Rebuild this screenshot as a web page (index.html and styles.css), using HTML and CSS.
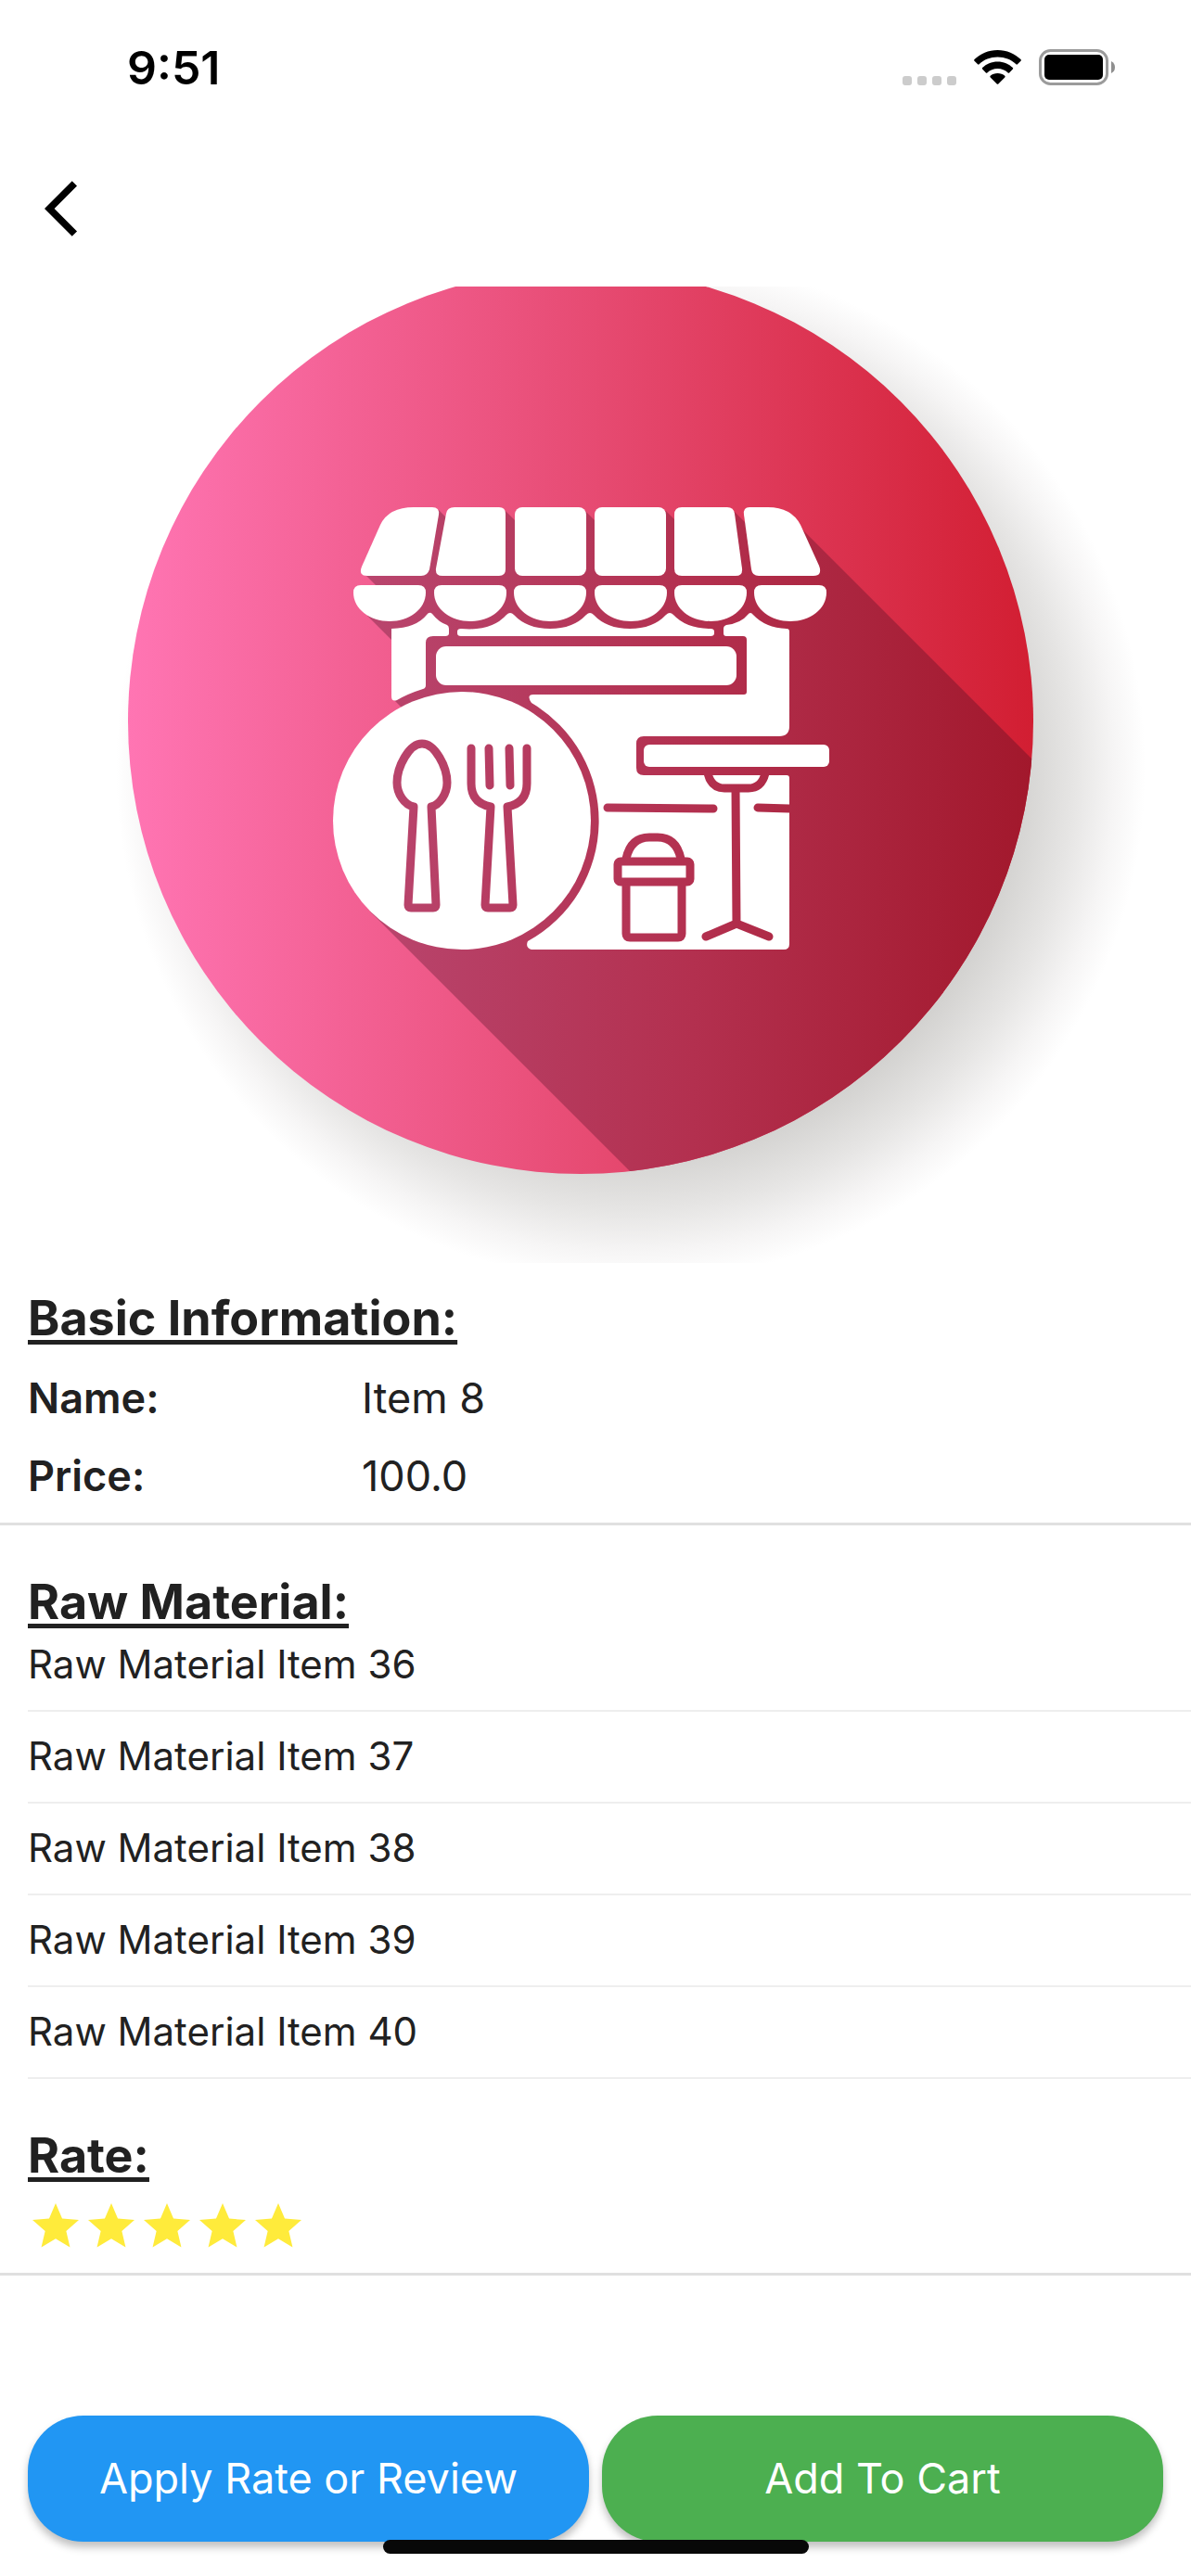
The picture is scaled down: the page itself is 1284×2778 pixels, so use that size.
FILE: index.html
```html
<!DOCTYPE html>
<html lang="en">
<head>
<meta charset="utf-8">
<meta name="viewport" content="width=device-width, initial-scale=1">
<title>Item 8</title>
<link rel="stylesheet" href="styles.css">
</head>
<body>
<div class="screen">
  <header class="status-bar">
    <time class="clock">9:51</time>
    <div class="status-icons">
      <span class="signal"><i></i><i></i><i></i><i></i></span>
      <svg class="wifi" viewBox="0 0 51 37" aria-hidden="true">
        <path d="M25.500 0C35.300 0 44.200 3.900 50.500 10.100Q51.200 10.900 50.500 11.700L46.900 15.300Q46.200 16 45.400 15.300C40.300 10.400 33.300 7.600 25.500 7.600S10.700 10.400 5.600 15.300Q4.800 16 4.100 15.300L.5 11.700Q-.2 10.900 .5 10.100C6.800 3.900 15.700 0 25.500 0Z"/>
        <path d="M25.500 12.500C31.900 12.500 37.700 15 41.900 19.100Q42.600 19.900 41.900 20.600L38.100 24.400Q37.400 25 36.700 24.400C33.800 21.700 29.900 20.100 25.500 20.100S17.200 21.700 14.300 24.400Q13.600 25 12.900 24.400L9.100 20.600Q8.400 19.900 9.100 19.100C13.300 15 19.100 12.500 25.500 12.500Z"/>
        <path d="M25.500 25C28.500 25 31.200 26 33.300 27.800Q34.100 28.600 33.300 29.400L26.300 36.400Q25.500 37 24.700 36.400L17.700 29.400Q16.900 28.600 17.700 27.800C19.800 26 22.500 25 25.500 25Z"/>
      </svg>
      <svg class="battery" viewBox="0 0 82 39" aria-hidden="true">
        <rect x="1.500" y="1.500" width="72" height="36" rx="11" fill="none" stroke="#9b9b9b" stroke-width="3"/>
        <rect x="6" y="6" width="63" height="27" rx="5"/>
        <path d="M78 13Q82 15 82 19.500T78 26Z" fill="#8f8f8f"/>
      </svg>
    </div>
  </header>

  <nav class="app-bar">
    <button class="back" type="button" aria-label="Back">
      <svg viewBox="0 0 24 24" aria-hidden="true"><path d="M11.670 3.870 9.900 2.100 0 12l9.900 9.900 1.770-1.770L3.540 12z"/></svg>
    </button>
  </nav>

  <main>
    <svg class="cover" viewBox="0 309 1284 1053" role="img" aria-label="Restaurant">
      <defs>
        <linearGradient id="disc" gradientUnits="userSpaceOnUse" x1="138" y1="0" x2="1114" y2="0">
          <stop offset="0" stop-color="#ff75b3"/>
          <stop offset=".5" stop-color="#e74c74"/>
          <stop offset="1" stop-color="#d21e32"/>
        </linearGradient>
        <linearGradient id="shade" gradientUnits="userSpaceOnUse" x1="380" y1="0" x2="1114" y2="0">
          <stop offset="0" stop-color="#b9466f"/>
          <stop offset=".5" stop-color="#b3304f"/>
          <stop offset="1" stop-color="#a2182c"/>
        </linearGradient>
        <radialGradient id="drop" gradientUnits="userSpaceOnUse" cx="680" cy="828" r="555">
          <stop offset=".74" stop-color="#d1d0ce"/>
          <stop offset=".86" stop-color="#e6e5e4"/>
          <stop offset=".94" stop-color="#f6f5f5"/>
          <stop offset="1" stop-color="#fff"/>
        </radialGradient>
        <clipPath id="round"><circle cx="626" cy="778" r="488"/></clipPath>
        <path id="scallop" d="M0 639Q0 631 8 631H70Q78 631 78 639C78 657 60 670 39 670S0 657 0 639Z"/>
      </defs>
      <circle cx="680" cy="828" r="555" fill="url(#drop)"/>
      <circle cx="626" cy="778" r="488" fill="url(#disc)"/>
      <path clip-path="url(#round)" fill="url(#shade)" d="M862 568L1200 906V1400H816L399 983L497 885L432 762L422 752V690L396 664V640L410 636L393 619L420 600L470 560L473 550L484 561L500 552L545 551L556 562L570 552L631 551L642 562L660 552L718 551L728 561L740 552L792 552L804 564L820 552H840Z"/>
      <g fill="#fff">
        <path d="M446 547H466Q474 547 473 555L463 614Q461 621 454 621H396Q386 621 390 611L410 566Q419 547 446 547Z"/>
        <path d="M490 547H538Q545 547 545 554V614Q545 621 538 621H477Q469 621 470 613L481 554Q482 547 490 547Z"/>
        <rect x="555" y="547" width="77" height="74" rx="8"/>
        <rect x="641" y="547" width="77" height="74" rx="8"/>
        <path d="M735 547H784Q791 547 792 554L800 613Q801 621 793 621H735Q727 621 727 613V555Q727 547 735 547Z"/>
        <path d="M808 547H828Q853 547 863 566L883 610Q887 621 877 621H818Q811 621 810 614L802 555Q801 547 808 547Z"/>
        <use href="#scallop" x="381"/><use href="#scallop" x="468"/><use href="#scallop" x="554"/>
        <use href="#scallop" x="641"/><use href="#scallop" x="727"/><use href="#scallop" x="813"/>
        <path d="M422 678Q449 677 460 663Q463 659 466 662Q473 671 482 674Q484 675 484 678V683Q484 686 480 686H467Q459 686 459 693V739Q459 742 456 743Q440 748 428 755Q422 757 422 751Z"/>
        <path d="M497 678Q530 681 546 663Q550 659 554 663Q568 678 593 678Q618 678 632 663Q636 659 640 663Q654 678 679 678Q704 678 718 663Q722 659 726 663Q740 678 766 678Q770 678 770 681V683Q770 686 766 686H497Q493 686 493 683V681Q493 678 497 678Z"/>
        <path d="M780 678Q780 675 783 674Q799 672 806 663Q809 659 812 663Q825 677 848 678Q851 678 851 681V783Q851 794 840 794H694Q686 794 686 802V828Q686 836 694 836H848Q851 836 851 839V1018Q851 1024 845 1024H573Q566 1022 569 1015A148 148 0 0 0 573 758Q567 749 575 749H802Q805 749 805 746V690Q805 686 801 686H783Q780 686 780 683Z"/>
        <rect x="470" y="697" width="324" height="42" rx="11"/>
        <rect x="694" y="803" width="200" height="24" rx="6"/>
        <circle cx="498" cy="885" r="139"/>
      </g>
      <g fill="none" stroke="url(#shade)" stroke-width="9" stroke-linecap="round" stroke-linejoin="round">
        <path d="M455 802C441 802 428 827 428 844C428 856 436 868 446 870L440 976Q440 979 443 979H467Q470 979 470 976L465 870C474 868 482 856 482 844C482 827 469 802 455 802Z"/>
        <path d="M508 807V845Q508 866 529 870L523 976Q523 979 526 979H550Q553 979 553 976L547 870Q568 866 568 845V807M527 807L528 847M549 807L550 847"/>
        <path d="M655 871L769 872M817 871L851 872"/>
        <path d="M763 834Q767 850 781 850H807Q821 850 825 834M793 850L794 996M761 1010L794 996L829 1010"/>
        <path d="M675 926Q680 903 700 903H709Q729 903 734 926M675 953V1007Q675 1011 679 1011H731Q735 1011 735 1007V953"/>
        <rect x="666" y="929" width="78" height="22" rx="3"/>
      </g>
    </svg>

    <section class="block">
      <h2>Basic Information:</h2>
      <dl class="facts">
        <dt>Name:</dt><dd>Item 8</dd>
        <dt>Price:</dt><dd>100.0</dd>
      </dl>
    </section>

    <section class="block materials">
      <h2>Raw Material:</h2>
      <ul>
        <li>Raw Material Item 36</li>
        <li>Raw Material Item 37</li>
        <li>Raw Material Item 38</li>
        <li>Raw Material Item 39</li>
        <li>Raw Material Item 40</li>
      </ul>
      <h2 class="rate-title">Rate:</h2>
      <div class="stars" role="img" aria-label="5 out of 5 stars">
        <svg viewBox="0 0 24 24"><path id="star" d="M12 17.270 18.180 21l-1.640-7.030L22 9.240l-7.190-.610L12 2 9.190 8.630 2 9.240l5.460 4.730L5.820 21z"/></svg>
        <svg viewBox="0 0 24 24"><use href="#star"/></svg>
        <svg viewBox="0 0 24 24"><use href="#star"/></svg>
        <svg viewBox="0 0 24 24"><use href="#star"/></svg>
        <svg viewBox="0 0 24 24"><use href="#star"/></svg>
      </div>
    </section>
  </main>

  <footer class="actions">
    <button class="action review" type="button">Apply Rate or Review</button>
    <button class="action cart" type="button">Add To Cart</button>
    <span class="home-indicator"></span>
  </footer>
</div>
</body>
</html>
```

FILE: styles.css
```css
* {
  box-sizing: border-box;
}

body {
  margin: 0;
  background: #fff;
  color: #212121;
  font-family: Inter, "Liberation Sans", sans-serif;
  font-size: 45px;
  line-height: 60px;
}

h2, dl, dd, ul {
  margin: 0;
  padding: 0;
}

button {
  border: 0;
  padding: 0;
  font: inherit;
}

svg {
  display: block;
}

.screen {
  display: flex;
  flex-direction: column;
  min-height: 100vh;
}

.status-bar {
  display: flex;
  justify-content: space-between;
  align-items: center;
  height: 141px;
  padding: 4px 82px 0 137px;
  color: #000;
}

.clock {
  font-size: 50px;
  font-weight: 600;
}

.status-icons {
  display: flex;
  align-items: center;
  gap: 19px;
}

.signal {
  display: flex;
  align-self: flex-end;
  gap: 6px;
}

.signal i {
  width: 10px;
  height: 10px;
  border-radius: 3px;
  background: #ccc;
}

.wifi {
  width: 51px;
  height: 37px;
}

.battery {
  width: 82px;
  height: 39px;
}

.app-bar {
  display: flex;
  align-items: center;
  height: 168px;
  padding-left: 48px;
}

.back {
  background: none;
}

.back svg {
  width: 72px;
  height: 72px;
}

.cover {
  width: 100%;
  height: auto;
}

.block {
  padding: 30px 0 20px 30px;
  border-bottom: 3px solid #e0e0e0;
}

h2 {
  font-size: 52px;
  font-weight: 700;
  line-height: 60px;
  text-decoration: underline;
  text-decoration-thickness: 5px;
  text-underline-offset: 5px;
  text-decoration-skip-ink: none;
}

.facts {
  display: grid;
  grid-template-columns: 360px 1fr;
  row-gap: 24px;
  padding-top: 26px;
}

dt {
  font-weight: 600;
}

.materials {
  padding-top: 53px;
}

.materials ul {
  list-style: none;
}

.materials li {
  height: 99px;
  padding-top: 23px;
  border-bottom: 2px solid #eee;
  font-size: 42px;
  line-height: 50px;
}

.materials li:first-child {
  height: 88px;
  padding-top: 12px;
}

.rate-title {
  padding-top: 53px;
}

.stars {
  display: flex;
  padding-top: 16px;
}

.stars svg {
  width: 60px;
  height: 60px;
  fill: #ffeb3b;
}

.actions {
  position: relative;
  display: flex;
  gap: 14px;
  margin-top: auto;
  padding: 0 30px 37px;
}

.action {
  flex: 1;
  height: 136px;
  border-radius: 60px;
  box-shadow: 0 6px 8px rgba(0, 0, 0, .25);
  color: #fff;
}

.review {
  background: #2196f3;
}

.cart {
  background: #4caf50;
}

.home-indicator {
  position: absolute;
  bottom: 24px;
  left: 50%;
  width: 459px;
  height: 15px;
  margin-left: -229px;
  border-radius: 8px;
  background: #080808;
}
```
